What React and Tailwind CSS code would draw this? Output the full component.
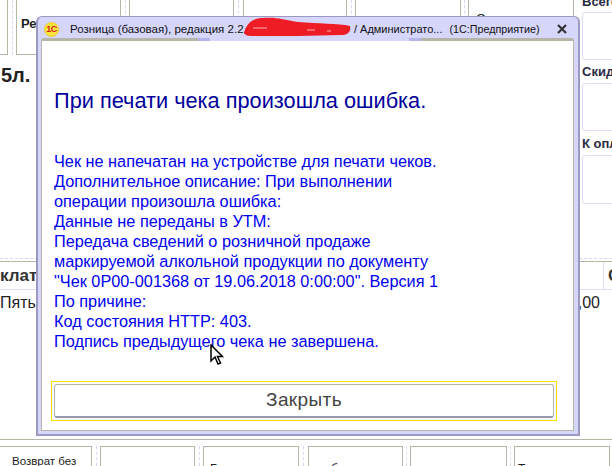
import React from 'react';

const bottomCells = [
  { width: 'w-[92px]', label: 'Возврат без', text: 'pl-[12px] pt-[7px] text-[11.5px]' },
  { width: 'w-[95px]', label: '', gap: 'w-[8px]' },
  { width: 'w-[96px]', label: 'Б', text: 'pl-[6px] pt-[15px] text-[12px]', gap: 'w-[8px]' },
  { width: 'w-[95px]', label: 'б', text: 'pl-[22px] pt-[15px] text-[12px]', gap: 'w-[9px]' },
  { width: 'w-[97px]', label: '', gap: 'w-[7px]' },
  { width: 'w-[96px]', label: 'Т', text: 'pl-[3px] pt-[15px] text-[12px]', gap: 'w-[7px]' },
];

function Dashes({ className }) {
  return (
    <div className={`${className} flex justify-center self-stretch`}>
      <div className="w-0 border-l border-dashed border-[#d8d8f4]" />
    </div>
  );
}

export default function App() {
  return (
    <div className="relative w-[612px] h-[466px] overflow-hidden bg-white font-['Liberation_Sans',sans-serif] text-[#222]">
      {/* Background form */}
      <div className="flex h-[258px]">
        <div className="w-[581px] shrink-0">
          <div className="flex h-[55px]">
            <div className="w-[8px] border-r border-b border-[#b5b5a8]" />
            <Dashes className="w-[8px]" />
            <div className="w-[105px] border-x border-b border-[#b5b5a8] pl-[4px] pt-[16px] text-[13px] font-bold leading-[16px]">Ре</div>
            <Dashes className="w-[8px]" />
            <div className="w-[105px] border-x border-b border-[#b5b5a8]" />
            <Dashes className="w-[9px]" />
            <div className="w-[104px] border-x border-b border-[#b5b5a8]" />
            <Dashes className="w-[8px]" />
            <div className="w-[106px] border-x border-b border-[#b5b5a8]" />
            <Dashes className="w-[7px]" />
            <div className="w-[106px] border-x border-b border-[#b5b5a8] pl-[7px] pt-[12px] text-[13px] leading-[14px]">С</div>
          </div>
          <div className="pl-[1px] pt-[10px] text-[20px] font-bold leading-[20px]">5л.</div>
        </div>
        <div className="flex-1 min-w-0 overflow-hidden pl-[1px] flex flex-col text-[13px] font-bold leading-[12px] whitespace-nowrap text-[#2a2a44]">
          <span className="-mt-[4px]">Всего</span>
          <div className="h-[48px] w-[60px] shrink-0 mt-[4px] border border-[#dcdcf6] rounded-[3px]" />
          <span className="mt-[6px]">Скидка</span>
          <div className="h-[48px] w-[60px] shrink-0 mt-[5px] border border-[#dcdcf6] rounded-[3px]" />
          <span className="mt-[7px]">К оплате</span>
          <div className="h-[49px] w-[60px] shrink-0 mt-[5px] border border-[#dcdcf6] rounded-[3px]" />
        </div>
      </div>

      <div className="h-[3px] border-t border-dashed border-[#d8d8f4]" />
      <div className="flex h-[29px] border-y border-[#b5b5a8] border-b-[#dcdcf6]">
        <div className="w-[604px] shrink-0 border-r border-[#dcdcf6] pt-[5px] text-[17px] font-bold leading-[18px] text-[#333]">клат</div>
        <div className="flex-1 min-w-0 overflow-hidden pl-[4px] pt-[5px] text-[17px] font-bold leading-[18px] text-[#333]">С</div>
      </div>
      <div className="flex justify-between h-[149px] pt-[4px] pr-[12px] text-[16px] leading-[18px]">
        <span>Пять</span>
        <span>,00</span>
      </div>

      <div className="border-t border-[#b5b5a8] h-[7px]" />
      <div className="flex h-[20px] overflow-hidden">
        {bottomCells.map((cell, i) => (
          <React.Fragment key={i}>
            {cell.gap && <Dashes className={cell.gap} />}
            <div className={`${cell.width} shrink-0 border-x border-t border-[#b5b5a8] leading-[14px] whitespace-nowrap ${i === 0 ? 'border-l-0' : ''} ${cell.text || ''}`}>
              {cell.label}
            </div>
          </React.Fragment>
        ))}
      </div>

      {/* Error dialog */}
      <div className="absolute left-[36px] top-[16px] w-[544px] h-[420px] flex flex-col rounded-t-[6px] border-x-2 border-b-2 border-t border-[#9b99c2] bg-[#d6d6fb] pl-[3px] pr-[4px] pb-[3px]">
        <div className="flex items-center h-[21px] shrink-0 pt-[3px] pl-[3px] text-[11px] leading-[14px] text-[#111] whitespace-nowrap">
          <div className="w-[15px] h-[15px] shrink-0 rounded-full bg-[#f8e63c] border border-[#f3c52e] flex items-center justify-center text-[9px] font-bold leading-none tracking-[-0.5px] text-[#d81e1e]">1С</div>
          <span className="ml-[11px] text-[11.5px]">Розница (базовая), редакция 2.2 /</span>
          <span className="w-[104px] shrink-0" />
          <span>/ Администрато...</span>
          <span className="ml-[7px] text-[10.75px]">(1С:Предприятие)</span>
          <svg width="12" height="12" viewBox="0 0 12 12" className="ml-[16px] shrink-0">
            <path d="M2 2 L10 10 M10 2 L2 10" stroke="#333" strokeWidth="2.2" />
          </svg>
        </div>

        {/* Scribble over the company name */}
        <svg width="108" height="20" viewBox="0 0 108 20" className="absolute left-[205px] top-0">
          <path d="M1 16 C3 8 8 1 20 1 C35 0 40 3 55 5 C75 7 95 6 107 9 C108 14 106 18 98 18 C70 19 40 19 20 19 C10 19 3 20 1 16 Z" fill="#ee1c25" />
          <path d="M10 11 H24 M64 13 H72 M84 14 H88" stroke="#f8b0b0" strokeWidth="1" />
        </svg>

        {/* Shadow strip above the white panel */}
        <div className="flex h-[3px] shrink-0">
          <div className="w-[157px] bg-[#b5b5a8] rounded-tl-[3px]" />
          <div className="w-[12px] bg-[#b4b4ec]" />
          <div className="flex-1" />
          <div className="w-[12px] bg-[#b4b4ec]" />
          <div className="w-[153px] bg-[#b5b5a8] rounded-tr-[3px]" />
        </div>

        <div className="flex-1 flex flex-col bg-white border-x border-b border-[#b5b5a8] pl-[9px] pr-[16px]">
          <h1 className="mt-[47px] ml-[3px] text-[21.75px] leading-[26px] font-normal text-[#00009c] whitespace-nowrap">При печати чека произошла ошибка.</h1>
          <p className="mt-[37px] ml-[3px] text-[16.3px] leading-[20px] text-[#0000f0] whitespace-nowrap">
            Чек не напечатан на устройстве для печати чеков.<br />
            Дополнительное описание: При выполнении<br />
            операции произошла ошибка:<br />
            Данные не переданы в УТМ:<br />
            Передача сведений о розничной продаже<br />
            маркируемой алкольной продукции по документу<br />
            "Чек 0Р00-001368 от 19.06.2018 0:00:00". Версия 1<br />
            По причине:<br />
            Код состояния HTTP: 403.<br />
            Подпись предыдущего чека не завершена.
          </p>
          <div className="mt-auto mb-[9px] border border-[#ffdc00] p-[2px]">
            <button className="block w-full h-[34px] rounded-[3px] border border-[#b5b5a8] border-b-2 border-b-[#9b99b2] bg-white text-[19px] tracking-[0.4px] text-[#444]">
              Закрыть
            </button>
          </div>
        </div>
      </div>

      {/* Mouse cursor */}
      <svg width="14" height="22" viewBox="0 0 14 22" className="absolute left-[210px] top-[344px]">
        <path d="M1 1 V17 L5 13 L8 20 L10.5 19 L7.5 12.5 H12.5 Z" fill="#fff" stroke="#000" strokeWidth="1.5" />
      </svg>
    </div>
  );
}
